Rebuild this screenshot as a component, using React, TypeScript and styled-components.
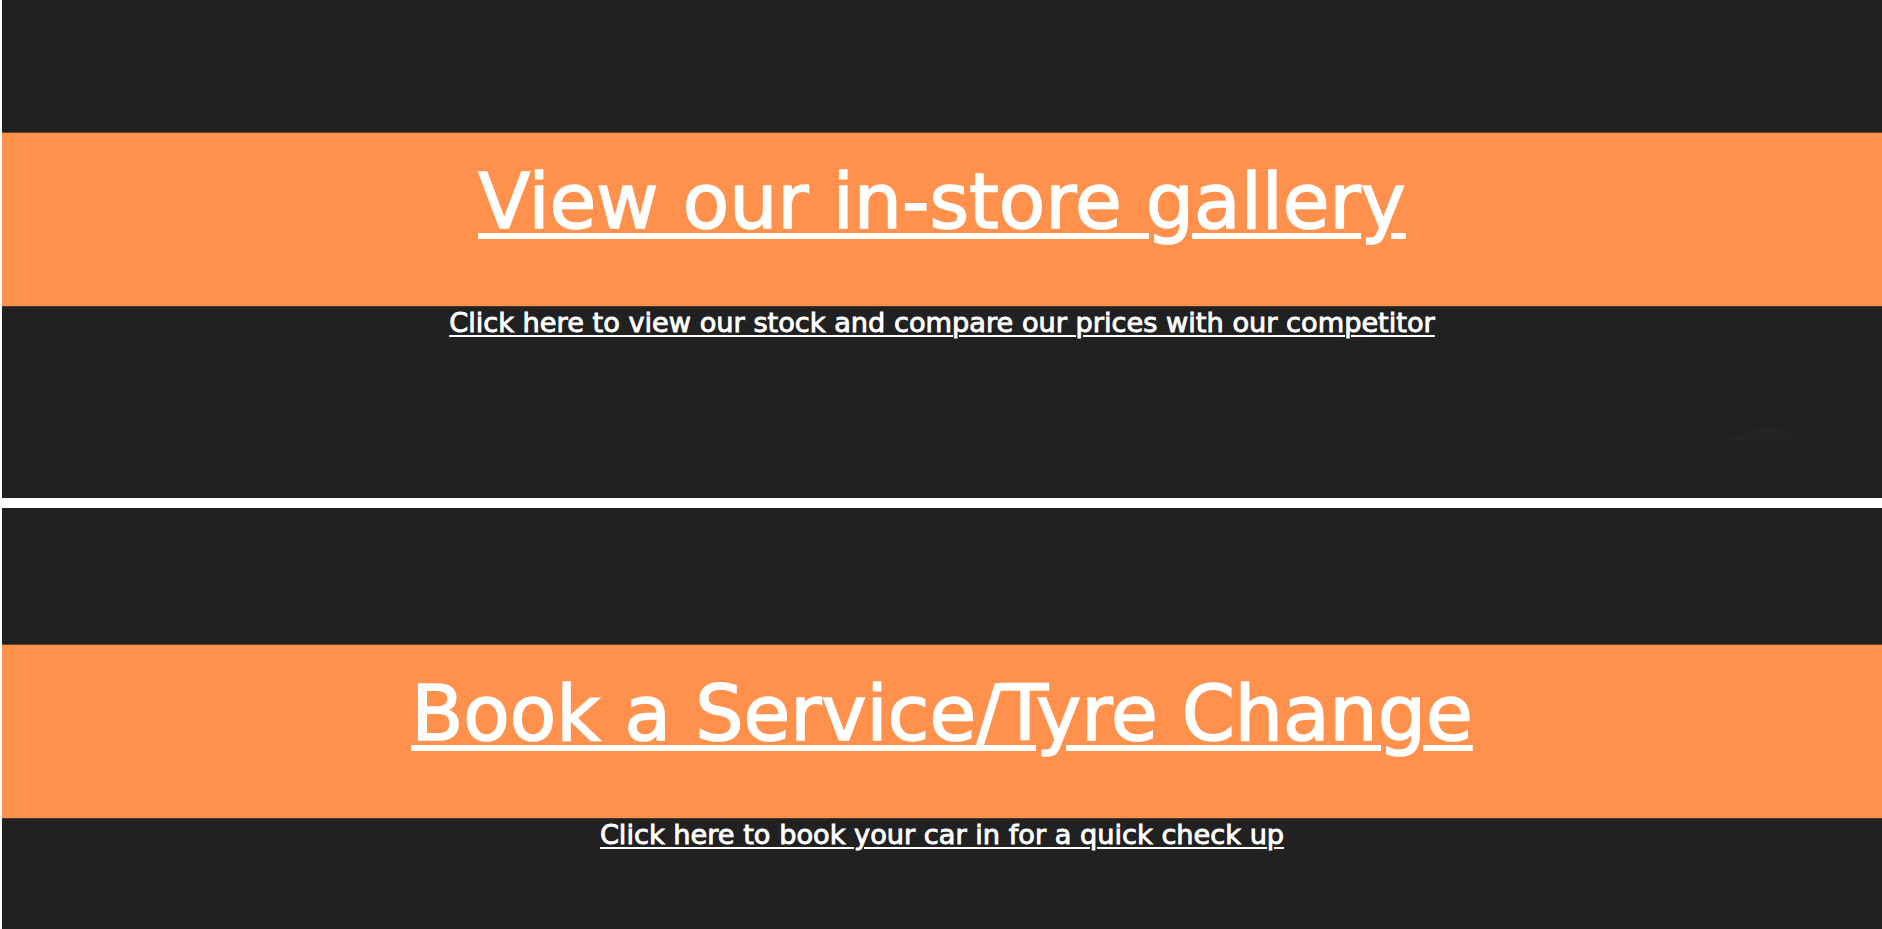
import React from "react";
import styled, { createGlobalStyle } from "styled-components";

const GlobalStyle = createGlobalStyle`
  html, body {
    margin: 0;
    padding: 0;
    background: #ffffff;
  }
  body {
    font-family: "DejaVu Sans", "Liberation Sans", sans-serif;
    overflow: hidden;
  }
`;

const Page = styled.main`
  display: flex;
  flex-direction: column;
  gap: 10px;
  padding-left: 2px;
`;

const Section = styled.section<{ $top: number; $minHeight?: number }>`
  position: relative;
  display: flex;
  flex-direction: column;
  align-items: stretch;
  background: #212121;
  padding-top: ${(p) => p.$top}px;
  min-height: ${(p) => (p.$minHeight ? `${p.$minHeight}px` : "auto")};
  box-sizing: border-box;
`;

const Banner = styled.div`
  height: 175px;
  box-sizing: border-box;
  background: #ff914d;
  border-top: 1px solid #6a4632;
  border-bottom: 1px solid #4a3628;
  padding-top: 24px;
  display: flex;
  justify-content: center;
  align-items: flex-start;
`;

const Heading = styled.h2`
  margin: 0;
  font-family: "DejaVu Sans", "Liberation Sans", sans-serif;
  font-weight: 400;
  font-size: 76px;
  line-height: 90px;
  color: #ffffff;
  text-align: center;
`;

const HeadingLink = styled.a`
  color: #ffffff;
  -webkit-text-stroke: 1.6px #ffffff;
  text-decoration: underline;
  text-decoration-thickness: 6px;
  text-underline-offset: 5px;
`;

const SubLine = styled.p`
  margin: 0;
  text-align: center;
  font-family: "DejaVu Sans", "Liberation Sans", sans-serif;
  font-size: 27.2px;
  line-height: normal;
  color: #ffffff;
`;

const SubLink = styled.a`
  color: #ffffff;
  -webkit-text-stroke: 0.9px #ffffff;
  text-decoration: underline;
  text-decoration-thickness: 2px;
  text-underline-offset: 3px;
`;

const FaintLogo = styled.svg`
  position: absolute;
  right: 86px;
  top: 422px;
  width: 84px;
  height: 22px;
`;

function CarMark() {
  return (
    <FaintLogo viewBox="0 0 84 22" aria-hidden="true">
      <path
        d="M2 19 C10 16 22 14 30 13 C38 9 46 5 56 5 C64 5 70 7 76 10 C80 11 82 13 83 17 L83 19 L2 19 Z"
        fill="#242424"
      />
      <path d="M28 12 L76 11" stroke="#262626" strokeWidth="1" />
    </FaintLogo>
  );
}

export default function App() {
  return (
    <>
      <GlobalStyle />
      <Page>
        <Section $top={132} $minHeight={498}>
          <Banner>
            <Heading>
              <HeadingLink href="#gallery">View our in-store gallery</HeadingLink>
            </Heading>
          </Banner>
          <SubLine>
            <SubLink href="#stock">
              Click here to view our stock and compare our prices with our competitor
            </SubLink>
          </SubLine>
          <CarMark />
        </Section>
        <Section $top={136} $minHeight={500}>
          <Banner>
            <Heading>
              <HeadingLink href="#service">Book a Service/Tyre Change</HeadingLink>
            </Heading>
          </Banner>
          <SubLine>
            <SubLink href="#booking">Click here to book your car in for a quick check up</SubLink>
          </SubLine>
        </Section>
      </Page>
    </>
  );
}
